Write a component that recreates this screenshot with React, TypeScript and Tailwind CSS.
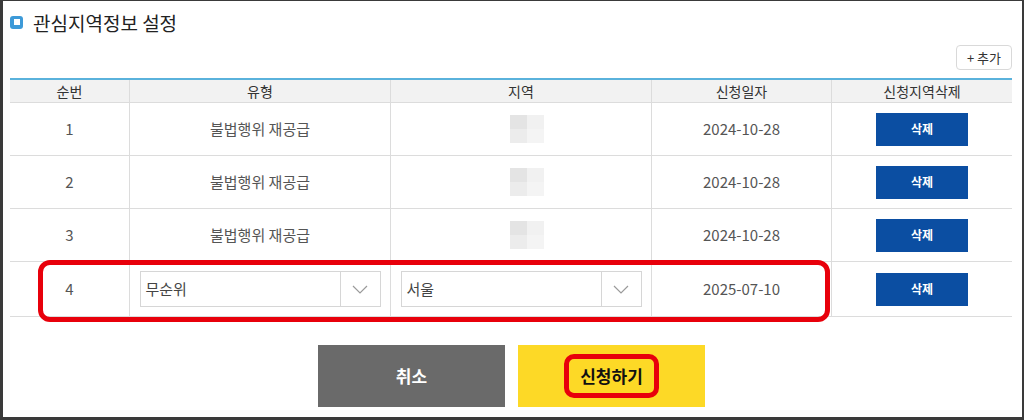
import { ReactNode } from "react";

const font = { fontFamily: '"Noto Sans CJK KR", "Noto Sans", sans-serif' };

const rows = [
  { no: 1, type: "불법행위 재공급", date: "2024-10-28" },
  { no: 2, type: "불법행위 재공급", date: "2024-10-28" },
  { no: 3, type: "불법행위 재공급", date: "2024-10-28" },
];

const cols = "grid grid-cols-[120px_261px_261px_180px_180px]";

function Cell({ children, last }: { children?: ReactNode; last?: boolean }) {
  return (
    <div className={`flex items-center justify-center ${last ? "" : "border-r border-[#dcdcdc]"}`}>
      {children}
    </div>
  );
}

function DeleteButton() {
  return (
    <button className="w-[92px] h-[33px] bg-[#0b4ea2] text-white text-[12px] font-bold">삭제</button>
  );
}

function Blurred() {
  // masked region placeholder
  return (
    <div className="grid grid-cols-2 w-[34px] h-[28px] ml-[12px]">
      <div className="bg-[#e4e4e4]" />
      <div className="bg-[#f1f1f1]" />
      <div className="bg-[#ececec]" />
      <div className="bg-[#f4f4f4]" />
    </div>
  );
}

function SelectBox({ value }: { value: string }) {
  return (
    <div className="flex w-[241px] h-[36px] border border-[#d6d6d6] bg-white">
      <div className="flex-1 flex items-center pl-[5px] text-[15px] text-[#444]">{value}</div>
      <div className="w-[40px] border-l border-[#d6d6d6] flex items-center justify-center">
        <svg width="16" height="9" viewBox="0 0 16 9" fill="none">
          <path d="M1 1l7 7 7-7" stroke="#9a9a9a" strokeWidth="1.2" />
        </svg>
      </div>
    </div>
  );
}

export default function App() {
  return (
    <div
      style={font}
      className="w-[1024px] h-[420px] bg-white border-t border-l-[3px] border-r-2 border-b-[3px] border-[#3a3a3a] pl-[7px] pt-[10px] overflow-hidden"
    >
      {/* Title */}
      <div className="flex items-center gap-[10px] h-[22px]">
        <div className="w-[13px] h-[13px] rounded-[3px] bg-[#3d9ad8] flex items-center justify-center">
          <div className="w-[6px] h-[6px] bg-white" />
        </div>
        <h1 className="text-[19px] text-[#222] leading-none">관심지역정보 설정</h1>
      </div>

      {/* Add button */}
      <div className="flex justify-end w-[1002px] mt-[12px]">
        <button className="w-[56px] h-[25px] border border-[#d9d9d9] rounded-[4px] text-[13px] text-[#333] bg-white">
          + 추가
        </button>
      </div>

      {/* Table */}
      <div className="w-[1002px] mt-[8px] border-t-2 border-[#5ab2dc]">
        <div className={`${cols} h-[23px] bg-[#f2f2f2] border-b border-[#dcdcdc] text-[14px] text-[#333]`}>
          <Cell>순번</Cell>
          <Cell>유형</Cell>
          <Cell>지역</Cell>
          <Cell>신청일자</Cell>
          <Cell last>신청지역삭제</Cell>
        </div>
        {rows.map((r) => (
          <div key={r.no} className={`${cols} h-[53px] border-b border-[#dcdcdc] text-[15px] text-[#555]`}>
            <Cell>{r.no}</Cell>
            <Cell>{r.type}</Cell>
            <Cell>
              <Blurred />
            </Cell>
            <Cell>{r.date}</Cell>
            <Cell last>
              <DeleteButton />
            </Cell>
          </div>
        ))}
        <div className={`${cols} relative h-[55px] border-b border-[#dcdcdc] text-[15px] text-[#555]`}>
          <Cell>4</Cell>
          <Cell>
            <SelectBox value="무순위" />
          </Cell>
          <Cell>
            <SelectBox value="서울" />
          </Cell>
          <Cell>2025-07-10</Cell>
          <Cell last>
            <DeleteButton />
          </Cell>
          {/* highlight overlay */}
          <div className="absolute left-[28px] top-[-2px] w-[792px] h-[62px] border-[5px] border-[#e8000b] rounded-[12px] pointer-events-none" />
        </div>
      </div>

      {/* Bottom buttons */}
      <div className="flex justify-center gap-[13px] w-[1002px] mt-[28px] pl-[1px]">
        <button className="w-[187px] h-[62px] bg-[#6a6a6a] text-white text-[17px] font-bold">취소</button>
        <button className="w-[187px] h-[62px] bg-[#fdd926] text-[#111] text-[17px] font-bold flex items-center justify-center">
          <span className="px-[11px] py-[6px] border-[5px] border-[#e8000b] rounded-[10px] leading-tight">신청하기</span>
        </button>
      </div>
    </div>
  );
}
